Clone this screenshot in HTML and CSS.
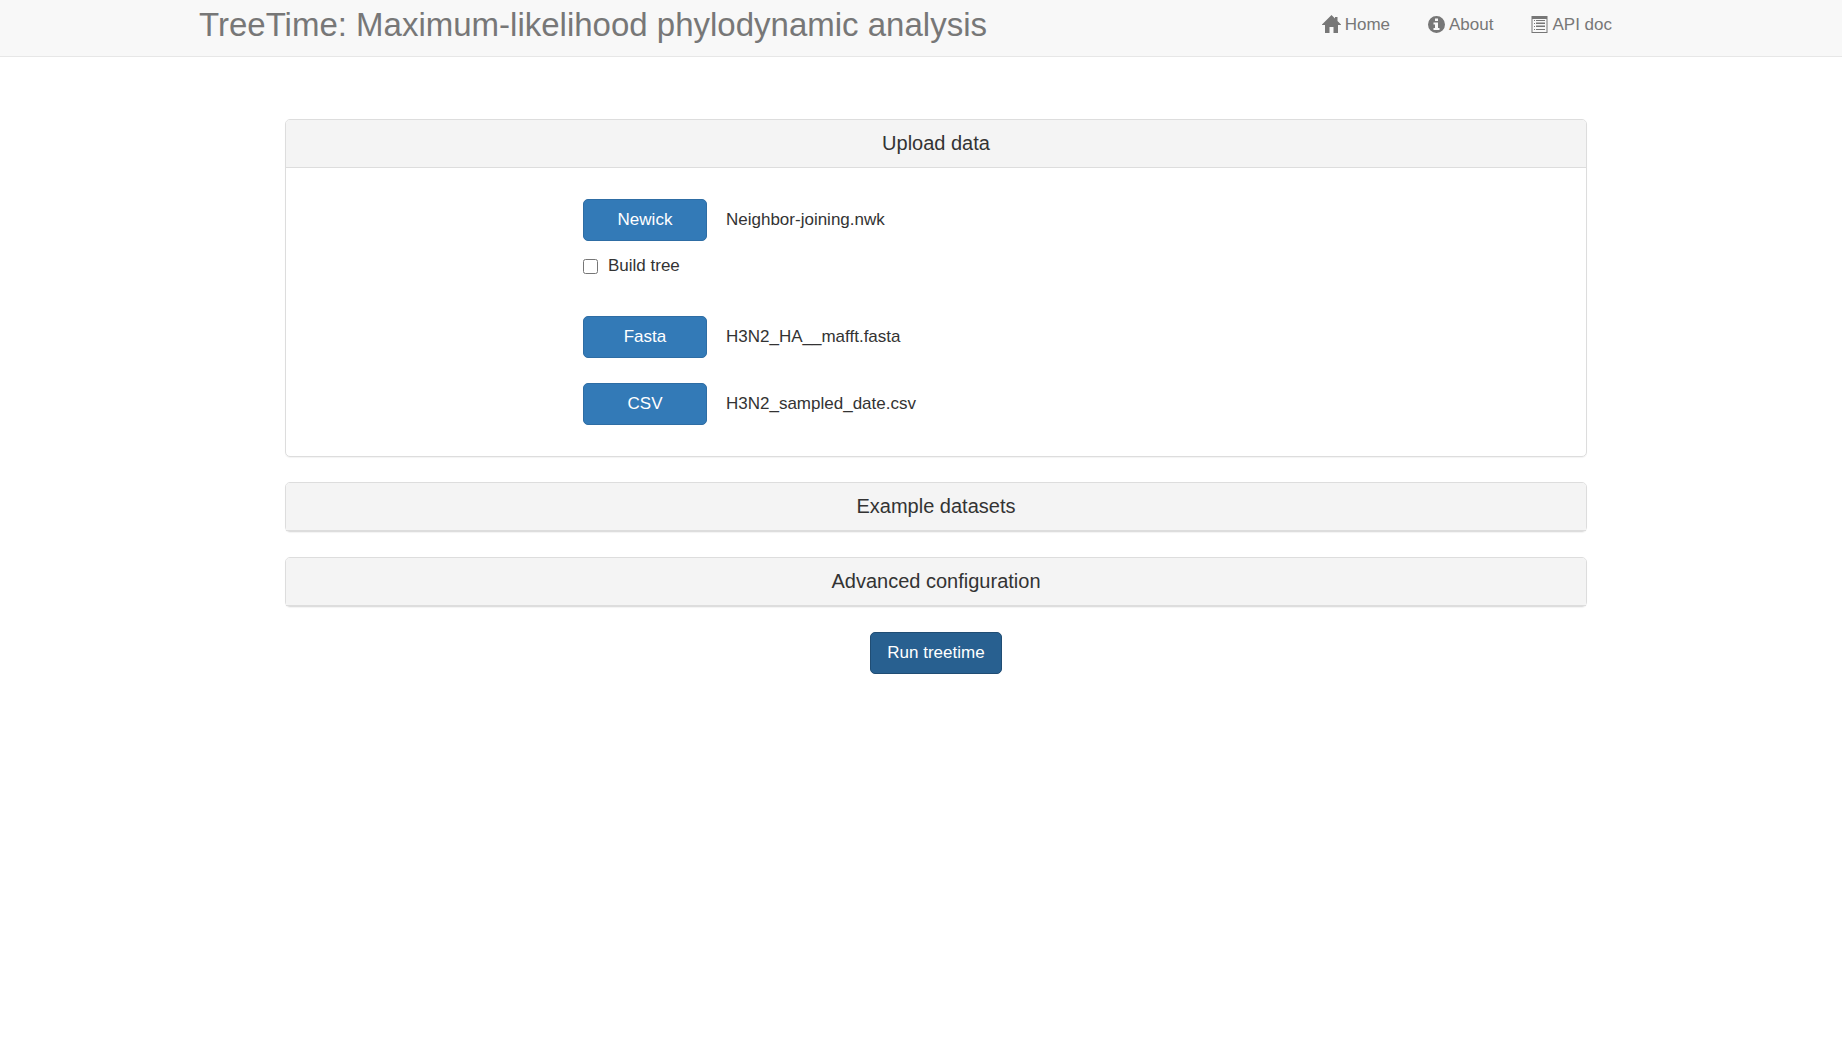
FILE: index.html
```html
<!DOCTYPE html>
<html lang="en">
<head>
  <meta charset="utf-8">
  <meta name="viewport" content="width=device-width, initial-scale=1">
  <title>TreeTime</title>
  <link rel="stylesheet" href="styles.css">
</head>
<body>
  <header class="navbar">
    <div class="container navbar-inner">
      <h1 class="brand">TreeTime: Maximum-likelihood phylodynamic analysis</h1>
      <nav class="nav">
        <a class="nav-link" href="#home">
          <svg class="icon icon-home" viewBox="0 0 19 18" aria-hidden="true"><path d="M9.500 0 13 3.500V2h2.500v4L19 9.500V10h-3v8h-4.500v-6h-4v6H3v-8H0v-.500z"/></svg>
          <span>Home</span>
        </a>
        <a class="nav-link" href="#about">
          <svg class="icon" viewBox="0 0 17 17" aria-hidden="true"><path fill-rule="evenodd" d="M8.500 0a8.500 8.500 0 1 0 0 17 8.500 8.500 0 0 0 0-17zM7 2.500h3V5H7zM5.500 6.500H10V12h1.500v2h-6v-2H7V8.500H5.500z"/></svg>
          <span>About</span>
        </a>
        <a class="nav-link" href="#api">
          <svg class="icon" viewBox="0 0 17 17" aria-hidden="true"><path fill-rule="evenodd" d="M.500 0h16v17H.500zM1.500 3v13h14V3z"/><path d="M3 4h1v1H3zM3 7h1v1H3zM3 10h1v1H3zM3 13h1v1H3zM5 4h9v1H5zM5 6.500h9V8H5zM5 9.500h9V11H5zM5 13h9v1H5z"/></svg>
          <span>API doc</span>
        </a>
      </nav>
    </div>
  </header>

  <main class="container content">
    <section class="panel">
      <h2 class="panel-heading">Upload data</h2>
      <div class="panel-body">
        <div class="upload-row">
          <button class="btn" type="button">Newick</button>
          <span>Neighbor-joining.nwk</span>
        </div>
        <label class="check"><input class="check-box" type="checkbox"> Build tree</label>
        <div class="upload-row">
          <button class="btn" type="button">Fasta</button>
          <span>H3N2_HA__mafft.fasta</span>
        </div>
        <div class="upload-row">
          <button class="btn" type="button">CSV</button>
          <span>H3N2_sampled_date.csv</span>
        </div>
      </div>
    </section>

    <section class="panel">
      <h2 class="panel-heading">Example datasets</h2>
    </section>

    <section class="panel">
      <h2 class="panel-heading">Advanced configuration</h2>
    </section>

    <button class="btn btn-run" type="submit">Run treetime</button>
  </main>
</body>
</html>
```
FILE: styles.css
```css
* {
  box-sizing: border-box;
}

body {
  margin: 0;
  background: #fff;
  color: #333;
  font-family: "Liberation Sans", Arial, sans-serif;
  font-size: 17px;
  line-height: 24px;
}

.container {
  max-width: 1462px;
  margin: 0 auto;
}

.navbar {
  background: #f8f8f8;
  border-bottom: 1px solid #e7e7e7;
}

.navbar-inner {
  display: flex;
  flex-wrap: wrap;
  justify-content: space-between;
  padding: 0 40px 6px 9px;
}

.brand {
  margin: 0;
  color: #777;
  font-size: 33px;
  font-weight: 400;
  line-height: 50px;
}

.nav {
  display: flex;
  align-items: center;
  gap: 38px;
}

.nav-link {
  display: flex;
  align-items: center;
  gap: 4px;
  color: #777;
  text-decoration: none;
}

.icon {
  width: 17px;
  height: 17px;
  margin-bottom: 2px;
  fill: currentColor;
}

.icon-home {
  width: 19px;
  height: 18px;
}

.content {
  display: flex;
  flex-direction: column;
  gap: 25px;
  padding: 62px 65px 40px 95px;
}

.panel {
  border: 1px solid #ddd;
  border-radius: 5px;
  box-shadow: 0 1px 1px rgba(0, 0, 0, 0.05);
}

.panel-heading {
  margin: 0;
  padding: 12px 18px;
  border-bottom: 1px solid #ddd;
  border-radius: 4px 4px 0 0;
  background: #f4f4f4;
  font-size: 20px;
  font-weight: 400;
  line-height: 23px;
  text-align: center;
}

.panel-body {
  display: flex;
  flex-direction: column;
  gap: 25px;
  padding: 31px 18px 31px 297px;
}

.upload-row {
  display: flex;
  align-items: center;
  gap: 19px;
}

.btn {
  width: 124px;
  height: 42px;
  padding: 0 12px;
  border: 1px solid #2e6da4;
  border-radius: 5px;
  background: #337ab7;
  color: #fff;
  font: inherit;
  cursor: pointer;
}

.btn-run {
  align-self: center;
  width: 132px;
  border-color: #204d74;
  background: #286090;
}

.check {
  display: flex;
  align-items: center;
  align-self: flex-start;
  gap: 10px;
  margin: -12px 0 13px;
}

.check-box {
  width: 15px;
  height: 15px;
  margin: 0;
}
```
